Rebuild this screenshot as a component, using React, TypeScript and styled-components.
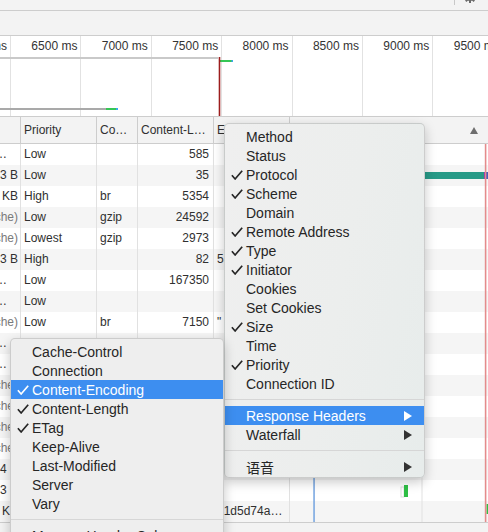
import React from 'react';
import styled, { createGlobalStyle } from 'styled-components';

const GlobalStyle = createGlobalStyle`
  html, body {
    margin: 0;
    padding: 0;
  }
  body {
    font-family: "Liberation Sans", Arial, sans-serif;
    background: #fff;
    overflow: hidden;
  }
`

const COLS = '20px 76px 41px 76px 76px 1fr';

const Page = styled.div`
  position: relative;
  width: 488px;
  height: 532px;
  overflow: hidden;
  display: flex;
  flex-direction: column;
  background: #fff;
  color: #303030;
  font-size: 12px;
`

const TopBar = styled.div`
  flex: none;
  height: 10px;
  background: #f3f3f3;
  border-bottom: 1px solid #cdcdcd;
  display: flex;
  justify-content: flex-end;
  align-items: flex-start;
  overflow: hidden;
`

const ToolbarDivider = styled.div`
  width: 1px;
  height: 5px;
  background: #c8c8c8;
  margin-right: 9px;
`

const GearIcon = styled.svg`
  margin-top: -9px;
  margin-right: 12px;
`

const FilterBar = styled.div`
  flex: none;
  height: 24px;
  background: #f3f3f3;
  border-bottom: 1px solid #cdcdcd;
`

const Overview = styled.div`
  position: relative;
  flex: none;
  height: 80px;
  display: flex;
  border-bottom: 1px solid #cdcdcd;
  overflow: hidden;
`

const OverviewCell = styled.div<{ $w: number }>`
  flex: none;
  box-sizing: border-box;
  width: ${p => p.$w}px;
  height: 100%;
  border-right: 1px solid #e2e2e2;
  overflow: hidden;
`

const TickLabel = styled.div`
  display: flex;
  justify-content: flex-end;
  height: 21px;
  line-height: 21px;
  padding-right: 3px;
  white-space: nowrap;
  color: #333;
`

const Overlay = styled.svg`
  position: absolute;
  left: 0;
  top: 0;
  pointer-events: none;
`

const Table = styled.div`
  flex: none;
  display: flex;
  flex-direction: column;
`

const HeaderRow = styled.div`
  display: grid;
  grid-template-columns: ${COLS};
  height: 26px;
  background: #f3f3f3;
  border-bottom: 1px solid #cdcdcd;
`

const HeadCell = styled.div<{ $first?: boolean }>`
  border-left: ${p => (p.$first ? 'none' : '1px solid #cdcdcd')};
  padding: 0 4px 0 3px;
  line-height: 26px;
  white-space: nowrap;
  overflow: hidden;
  text-overflow: ellipsis;
  color: #303030;
`

const SortCell = styled(HeadCell)`
  display: flex;
  align-items: center;
  justify-content: flex-end;
  padding-right: 10px;
`

const Body = styled.div`
  position: relative;
  height: 378px;
  overflow: hidden;
`

const Row = styled.div<{ $odd: boolean }>`
  display: grid;
  grid-template-columns: ${COLS};
  height: 21px;
  background: ${p => (p.$odd ? '#f5f5f5' : '#fff')};
`

const Cell = styled.div<{ $right?: boolean }>`
  border-left: 1px solid #e1e1e1;
  padding: 0 4px 0 3px;
  line-height: 21px;
  white-space: nowrap;
  overflow: hidden;
  text-overflow: ellipsis;
  text-align: ${p => (p.$right ? 'right' : 'left')};
`

const SizeCell = styled.div<{ $lead?: boolean; $muted?: boolean }>`
  display: flex;
  justify-content: ${p => (p.$lead ? 'flex-start' : 'flex-end')};
  padding-right: 2px;
  line-height: 21px;
  white-space: nowrap;
  overflow: hidden;
  color: ${p => (p.$muted ? '#7a7a7a' : '#303030')};
`

const Dots = styled.span`
  margin-left: -5px;
`

const StatusBar = styled.div`
  flex: 1;
  background: #f3f3f3;
  border-top: 1px solid #cdcdcd;
`

const Menu = styled.div<{ $left: number; $top: number; $width: number }>`
  position: absolute;
  left: ${p => p.$left}px;
  top: ${p => p.$top}px;
  width: ${p => p.$width}px;
  box-sizing: border-box;
  padding: 3px 0 1px;
  background: linear-gradient(100deg, #efefef 0%, #eceeed 55%, #e7eceb 100%);
  border: 1px solid rgba(0, 0, 0, 0.14);
  border-radius: 5px;
  box-shadow: 0 4px 12px rgba(0, 0, 0, 0.22);
  font-size: 14px;
  color: #262626;
`

const SubMenu = styled(Menu)`
  background: #eeeeee;
`

const Item = styled.div<{ $active?: boolean }>`
  display: flex;
  align-items: center;
  height: 19px;
  padding: 0 12px 0 6px;
  white-space: nowrap;
  background: ${p => (p.$active ? '#3d8ef0' : 'transparent')};
  color: ${p => (p.$active ? '#fff' : 'inherit')};
`

const Check = styled.span`
  flex: none;
  width: 15px;
  display: flex;
  align-items: center;
`

const ItemLabel = styled.span`
  flex: 1;
  font-family: "Liberation Sans", "Noto Sans CJK SC", sans-serif;
`

const Separator = styled.div`
  height: 1px;
  margin: 6px 0;
  background: #d6d6d6;
`

type MenuEntry = { label: string; checked?: boolean; active?: boolean; sub?: boolean } | 'sep';

const mainMenu: MenuEntry[] = [
  { label: 'Method' },
  { label: 'Status' },
  { label: 'Protocol', checked: true },
  { label: 'Scheme', checked: true },
  { label: 'Domain' },
  { label: 'Remote Address', checked: true },
  { label: 'Type', checked: true },
  { label: 'Initiator', checked: true },
  { label: 'Cookies' },
  { label: 'Set Cookies' },
  { label: 'Size', checked: true },
  { label: 'Time' },
  { label: 'Priority', checked: true },
  { label: 'Connection ID' },
  'sep',
  { label: 'Response Headers', active: true, sub: true },
  { label: 'Waterfall', sub: true },
  'sep',
  { label: '语音', sub: true },
];

const headerMenu: MenuEntry[] = [
  { label: 'Cache-Control' },
  { label: 'Connection' },
  { label: 'Content-Encoding', checked: true, active: true },
  { label: 'Content-Length', checked: true },
  { label: 'ETag', checked: true },
  { label: 'Keep-Alive' },
  { label: 'Last-Modified' },
  { label: 'Server' },
  { label: 'Vary' },
  'sep',
  { label: 'Manage Header Columns…' },
];

type Req = { size: string; lead?: boolean; muted?: boolean; priority: string; enc: string; len: string; etag: string };

const rows: Req[] = [
  { size: '…', lead: true, priority: 'Low', enc: '', len: '585', etag: '' },
  { size: '3 B', priority: 'Low', enc: '', len: '35', etag: '' },
  { size: '2.1 KB', priority: 'High', enc: 'br', len: '5354', etag: '' },
  { size: '(disk cache)', muted: true, priority: 'Low', enc: 'gzip', len: '24592', etag: '' },
  { size: '(disk cache)', muted: true, priority: 'Lowest', enc: 'gzip', len: '2973', etag: '' },
  { size: '253 B', priority: 'High', enc: '', len: '82', etag: '5a3e1c' },
  { size: '…', lead: true, priority: 'Low', enc: '', len: '167350', etag: '' },
  { size: '…', lead: true, priority: 'Low', enc: '', len: '', etag: '' },
  { size: '(disk cache)', muted: true, priority: 'Low', enc: 'br', len: '7150', etag: '"' },
  { size: '…', lead: true, priority: 'Low', enc: '', len: '', etag: '' },
  { size: '…', lead: true, priority: 'Low', enc: '', len: '', etag: '' },
  { size: '(disk cache)', muted: true, priority: 'Low', enc: 'gzip', len: '1203', etag: '' },
  { size: '(disk cache)', muted: true, priority: 'Low', enc: 'gzip', len: '842', etag: '' },
  { size: '(disk cache)', muted: true, priority: 'Low', enc: 'gzip', len: '3310', etag: '' },
  { size: '(disk cache)', muted: true, priority: 'Low', enc: 'gzip', len: '950', etag: '' },
  { size: '104 B', priority: 'High', enc: '', len: '61', etag: '' },
  { size: '53 B', priority: 'Low', enc: '', len: '43', etag: '' },
  { size: '1.2 KB', priority: 'High', enc: 'br', len: '2291', etag: '51d5d74a8e2f' },
];

const ticks = ['6500 ms', '7000 ms', '7500 ms', '8000 ms', '8500 ms', '9000 ms', '9500 ms'];

function ContextMenu({ entries }: { entries: MenuEntry[] }) {
  return (
    <>
      {entries.map((e, i) =>
        e === 'sep' ? (
          <Separator key={i} />
        ) : (
          <Item key={i} $active={e.active}>
            <Check>
              {e.checked && (
                <svg width="12" height="10" viewBox="0 0 12 10">
                  <path
                    d="M0.9 5.3 L4.1 9 L11.2 0.8"
                    fill="none"
                    stroke="currentColor"
                    strokeWidth="1.7"
                    strokeLinejoin="round"
                  />
                </svg>
              )}
            </Check>
            <ItemLabel>{e.label}</ItemLabel>
            {e.sub && (
              <svg width="8" height="10" viewBox="0 0 8 10">
                <polygon points="0,0 8,5 0,10" fill={e.active ? '#fff' : '#333'} />
              </svg>
            )}
          </Item>
        )
      )}
    </>
  );
}

export default function App() {
  return (
    <Page>
      <GlobalStyle />
      <TopBar>
        <ToolbarDivider />
        <GearIcon width="12" height="12" viewBox="0 0 12 12">
          <g fill="#6b6b6b">
            <circle cx="6" cy="6" r="4" />
            {[0, 45, 90, 135].map(a => (
              <rect key={a} x="5" y="0" width="2" height="12" transform={`rotate(${a} 6 6)`} />
            ))}
          </g>
          <circle cx="6" cy="6" r="1.6" fill="#f3f3f3" />
        </GearIcon>
      </TopBar>
      <FilterBar />

      <Overview>
        <OverviewCell $w={11}>
          <TickLabel>6000 ms</TickLabel>
        </OverviewCell>
        {ticks.map(t => (
          <OverviewCell key={t} $w={70.4}>
            <TickLabel>{t}</TickLabel>
          </OverviewCell>
        ))}
        <Overlay width="488" height="80">
          <rect x="0" y="21" width="218" height="2" fill="#c9c9c9" />
          <rect x="220" y="24" width="12" height="2" fill="#35c655" />
          <rect x="231.5" y="24" width="1.5" height="2" fill="#3aa6f0" />
          <rect x="0" y="72" width="106" height="2" fill="#a9a9a9" />
          <rect x="106" y="72" width="10" height="2" fill="#35c655" />
          <rect x="116" y="72" width="2" height="2" fill="#3aa6f0" />
          <rect x="218.7" y="21" width="1.6" height="59" fill="#9c1d1d" />
        </Overlay>
      </Overview>

      <Table>
        <HeaderRow>
          <HeadCell $first />
          <HeadCell>Priority</HeadCell>
          <HeadCell>Content-Encoding</HeadCell>
          <HeadCell>Content-Length</HeadCell>
          <HeadCell>ETag</HeadCell>
          <SortCell>
            <svg width="8" height="7" viewBox="0 0 8 7">
              <polygon points="4,0 8,7 0,7" fill="#6e6e6e" />
            </svg>
          </SortCell>
        </HeaderRow>
        <Body>
          {rows.map((r, i) => (
            <Row key={i} $odd={i % 2 === 1}>
              <SizeCell $lead={r.lead} $muted={r.muted}>
                {r.lead ? <Dots>…</Dots> : r.size}
              </SizeCell>
              <Cell>{r.priority}</Cell>
              <Cell>{r.enc}</Cell>
              <Cell $right>{r.len}</Cell>
              <Cell>{r.etag}</Cell>
              <Cell />
            </Row>
          ))}
          <Overlay width="488" height="378">
            <rect x="421.5" y="0" width="1" height="378" fill="#e1e1e1" />
            <rect x="313.3" y="0" width="1.5" height="378" fill="#74a4e0" />
            <rect x="380" y="28" width="104" height="7" fill="#279a87" />
            <rect x="484" y="28" width="2" height="7" fill="#9c2fb5" />
            <rect x="486" y="28" width="2" height="7" fill="#4c5cb8" />
            <rect x="401" y="343" width="3" height="10" fill="none" stroke="#d4d4d4" strokeWidth="0.8" />
            <rect x="404" y="341" width="4" height="12" fill="#2fbf45" />
            <rect x="486.5" y="360" width="1.5" height="10" fill="#2fbf45" />
            <rect x="484.8" y="0" width="1.6" height="378" fill="#e48c8c" />
          </Overlay>
        </Body>
      </Table>
      <StatusBar />

      <Menu $left={224} $top={123} $width={201}>
        <ContextMenu entries={mainMenu} />
      </Menu>
      <SubMenu $left={10} $top={338} $width={214}>
        <ContextMenu entries={headerMenu} />
      </SubMenu>
    </Page>
  );
}
